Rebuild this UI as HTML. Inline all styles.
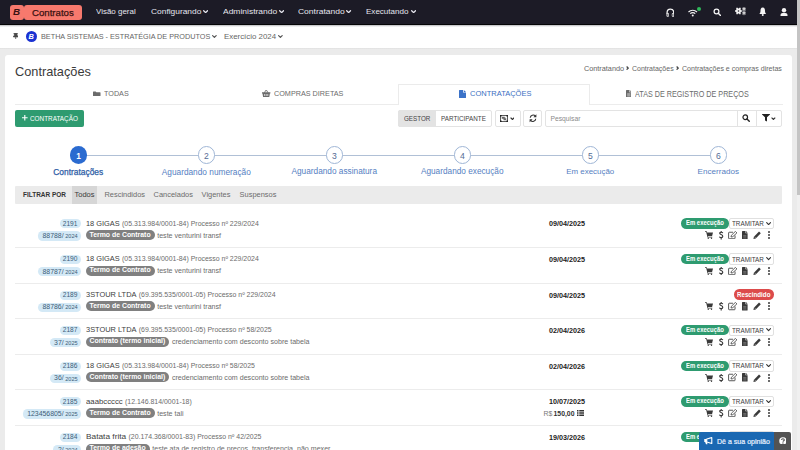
<!DOCTYPE html>
<html><head><meta charset="utf-8"><style>
html,body{margin:0;padding:0;width:800px;height:450px;overflow:hidden;background:#ebebeb;}
body{position:relative;font-family:"Liberation Sans",sans-serif;}
body>div,body>span,body>svg{position:absolute;display:block;}
body>span{white-space:nowrap;}
</style></head><body>
<div style="left:0.00px;top:0.00px;width:797.00px;height:24.50px;background:#1c1b26"></div>
<div style="left:9.50px;top:5.00px;width:14.00px;height:14.60px;background:#f7796d;border-radius:3px"></div>
<div style="left:23.50px;top:5.00px;width:58.50px;height:14.60px;background:#f7796d;border-radius:3px"></div>
<span style="left:13.00px;top:7.30px;font-size:9.800px;line-height:9.800px;color:#3a1212;font-weight:700;font-style:italic;">B</span>
<span style="left:32.00px;top:7.84px;font-size:9.642px;line-height:9.642px;color:#3a1212;-webkit-text-stroke:0.25px #3a1212;">Contratos</span>
<span style="left:96.40px;top:7.94px;font-size:8.101px;line-height:8.101px;color:#e6e6ee;transform:scaleX(0.9832);transform-origin:0 0;">Visão geral</span>
<span style="left:150.80px;top:7.94px;font-size:8.101px;line-height:8.101px;color:#e6e6ee;transform:scaleX(1.0363);transform-origin:0 0;">Configurando</span>
<svg style="left:203.00px;top:9.5px" width="5.2" height="3.8" viewBox="0 0 10 7.3"><path d="M1.3 1.3 L5 5 L8.7 1.3" stroke="#e6e6ee" stroke-width="2.5" fill="none" stroke-linecap="round" stroke-linejoin="round"/></svg>
<span style="left:222.60px;top:7.94px;font-size:8.101px;line-height:8.101px;color:#e6e6ee;transform:scaleX(1.0468);transform-origin:0 0;">Administrando</span>
<svg style="left:278.80px;top:9.5px" width="5.2" height="3.8" viewBox="0 0 10 7.3"><path d="M1.3 1.3 L5 5 L8.7 1.3" stroke="#e6e6ee" stroke-width="2.5" fill="none" stroke-linecap="round" stroke-linejoin="round"/></svg>
<span style="left:297.90px;top:7.94px;font-size:8.101px;line-height:8.101px;color:#e6e6ee;transform:scaleX(1.0475);transform-origin:0 0;">Contratando</span>
<svg style="left:346.40px;top:9.5px" width="5.2" height="3.8" viewBox="0 0 10 7.3"><path d="M1.3 1.3 L5 5 L8.7 1.3" stroke="#e6e6ee" stroke-width="2.5" fill="none" stroke-linecap="round" stroke-linejoin="round"/></svg>
<span style="left:366.20px;top:7.94px;font-size:8.101px;line-height:8.101px;color:#e6e6ee;transform:scaleX(0.9934);transform-origin:0 0;">Executando</span>
<svg style="left:410.80px;top:9.5px" width="5.2" height="3.8" viewBox="0 0 10 7.3"><path d="M1.3 1.3 L5 5 L8.7 1.3" stroke="#e6e6ee" stroke-width="2.5" fill="none" stroke-linecap="round" stroke-linejoin="round"/></svg>
<svg style="left:665.6px;top:7.6px" width="8.8" height="9" viewBox="0 0 17.6 18"><path d="M2.2 12 V8.8 A6.6 6.6 0 0 1 15.4 8.8 V12" stroke="#f4f4f4" stroke-width="2.6" fill="none"/><rect x="1" y="9.8" width="5" height="7.6" rx="2" fill="#f4f4f4"/><rect x="11.6" y="9.8" width="5" height="7.6" rx="2" fill="#f4f4f4"/><rect x="3" y="11.5" width="1.6" height="4.5" fill="#1c1b26"/><rect x="13" y="11.5" width="1.6" height="4.5" fill="#1c1b26"/></svg>
<svg style="left:688px;top:9px" width="9.5" height="7.5" viewBox="0 0 19 15"><path d="M1 6 A12 12 0 0 1 18 6" stroke="#f4f4f4" stroke-width="2.3" fill="none"/><path d="M4.5 9.3 A7 7 0 0 1 14.5 9.3" stroke="#f4f4f4" stroke-width="2.3" fill="none"/><circle cx="9.5" cy="13" r="2" fill="#f4f4f4"/></svg>
<div style="left:697.2px;top:6.6px;width:4px;height:4px;border-radius:50%;background:#2fb85a"></div>
<svg style="left:712.5px;top:8.3px" width="8.5" height="8" viewBox="0 0 17 16"><circle cx="7" cy="7" r="4.8" stroke="#f4f4f4" stroke-width="2.5" fill="none"/><path d="M10.5 10.5 L15 15" stroke="#f4f4f4" stroke-width="2.8" stroke-linecap="round"/></svg>
<svg style="left:734.5px;top:7.3px" width="11" height="8.4" viewBox="0 0 44 33.6"><circle cx="14.0" cy="16" r="10" fill="#f4f4f4"/><path d="M22.0 16.0 L25.8 16.0 M18.0 22.9 L19.9 26.2 M10.0 22.9 L8.1 26.2 M6.0 16.0 L2.2 16.0 M10.0 9.1 L8.1 5.8 M18.0 9.1 L19.9 5.8" stroke="#f4f4f4" stroke-width="6.5" stroke-linecap="round"/><circle cx="14.0" cy="16" r="3.2" fill="#1c1b26"/><circle cx="36" cy="8.5" r="5" fill="#f4f4f4"/><circle cx="36" cy="24.5" r="5" fill="#f4f4f4"/><path d="M39.5 10.5 L41.7 11.8 M36.0 12.5 L36.0 15.1 M32.5 10.5 L30.3 11.8 M32.5 6.5 L30.3 5.2 M36.0 4.5 L36.0 1.9 M39.5 6.5 L41.7 5.2 M39.5 26.5 L41.7 27.8 M36.0 28.5 L36.0 31.1 M32.5 26.5 L30.3 27.8 M32.5 22.5 L30.3 21.2 M36.0 20.5 L36.0 17.9 M39.5 22.5 L41.7 21.2" stroke="#f4f4f4" stroke-width="3.2" stroke-linecap="round"/><circle cx="36" cy="8.5" r="2" fill="#1c1b26"/><circle cx="36" cy="24.5" r="2" fill="#1c1b26"/></svg>
<svg style="left:759px;top:7.3px" width="7.5" height="9" viewBox="0 0 15 18"><path d="M7.5 1 C3.5 1 3 5 3 8 C3 11 2 12.5 0.5 14 H14.5 C13 12.5 12 11 12 8 C12 5 11.5 1 7.5 1Z" fill="#f4f4f4"/><circle cx="7.5" cy="15.8" r="2" fill="#f4f4f4"/></svg>
<svg style="left:780px;top:7.8px" width="8" height="8.4" viewBox="0 0 16 16.8"><circle cx="8" cy="4.6" r="4.4" fill="#f4f4f4"/><path d="M1 16.8 V14.2 C1 11.4 3 10 5.2 10 H10.8 C13 10 15 11.4 15 14.2 V16.8Z" fill="#f4f4f4"/></svg>
<div style="left:0.00px;top:24.50px;width:797.00px;height:23.50px;background:#ffffff"></div>
<div style="left:0.00px;top:23.70px;width:797.00px;height:1.30px;background:#050507"></div>
<div style="left:0.00px;top:25.00px;width:797.00px;height:1.60px;background:linear-gradient(#b8b8bc,#ffffff)"></div>
<div style="left:0.00px;top:47.60px;width:797.00px;height:1.50px;background:linear-gradient(#dcdcdc,#ebebeb)"></div>
<svg style="left:12.8px;top:32.9px" width="5.4" height="6.4" viewBox="0 0 10.8 12.8"><path d="M1 0.8 H9.8 M3 0.8 L2.6 5 L0.8 6.6 V7.8 H10 V6.6 L8.2 5 L7.8 0.8Z" stroke="#4a4a4a" stroke-width="1.6" fill="#4a4a4a" stroke-linejoin="round"/><path d="M5.4 7.8 V12.8" stroke="#4a4a4a" stroke-width="1.6"/></svg>
<div style="left:25.7px;top:30.5px;width:11.5px;height:11.5px;border-radius:50%;background:#1b32d2"></div>
<span style="left:28.60px;top:33.14px;font-size:7.400px;line-height:7.400px;color:#fff;font-weight:700;font-style:italic;">B</span>
<span style="left:41.00px;top:32.94px;font-size:8.101px;line-height:8.101px;color:#666;transform:scaleX(0.8975);transform-origin:0 0;">BETHA SISTEMAS - ESTRATÉGIA DE PRODUTOS</span>
<svg style="left:212.3px;top:34.6px" width="4.8" height="3.6" viewBox="0 0 10 7.3"><path d="M1.3 1.3 L5 5 L8.7 1.3" stroke="#555" stroke-width="2.5" fill="none" stroke-linecap="round" stroke-linejoin="round"/></svg>
<span style="left:224.30px;top:32.94px;font-size:8.101px;line-height:8.101px;color:#666;transform:scaleX(0.9724);transform-origin:0 0;">Exercício 2024</span>
<svg style="left:277.8px;top:34.6px" width="4.8" height="3.6" viewBox="0 0 10 7.3"><path d="M1.3 1.3 L5 5 L8.7 1.3" stroke="#555" stroke-width="2.5" fill="none" stroke-linecap="round" stroke-linejoin="round"/></svg>
<div style="left:797.00px;top:0.00px;width:3.00px;height:450.00px;background:#f0f0f0"></div>
<div style="left:797.00px;top:0.00px;width:3.00px;height:195.00px;background:#c4c4c4"></div>
<div style="left:5.00px;top:55.00px;width:787.00px;height:400.00px;background:#fff;border-radius:3px"></div>
<span style="left:15.00px;top:65.78px;font-size:12.779px;line-height:12.779px;color:#3a3a3a;">Contratações</span>
<span style="left:583.90px;top:65.00px;font-size:7.323px;line-height:7.323px;color:#666;">Contratando</span>
<svg style="left:626.3px;top:66.2px" width="2.8" height="4.2" viewBox="0 0 5 8"><path d="M1 1 L4 4 L1 7" stroke="#444" stroke-width="2.4" fill="none"/></svg>
<span style="left:632.00px;top:65.26px;font-size:7.012px;line-height:7.012px;color:#666;">Contratações</span>
<svg style="left:675.8px;top:66.2px" width="2.8" height="4.2" viewBox="0 0 5 8"><path d="M1 1 L4 4 L1 7" stroke="#444" stroke-width="2.4" fill="none"/></svg>
<span style="left:682.00px;top:65.23px;font-size:7.056px;line-height:7.056px;color:#666;">Contratações e compras diretas</span>
<div style="left:15.00px;top:104.00px;width:768.00px;height:1.00px;background:#ececec"></div>
<div style="left:398.40px;top:83.80px;width:191.60px;height:21.20px;background:#fff;border:1px solid #ebebeb;border-bottom:none;border-radius:1px 1px 0 0;box-sizing:border-box"></div>
<svg style="left:93.1px;top:90.9px" width="7.5" height="5.6" viewBox="0 0 20 12"><path d="M0 1 Q0 0 1 0 H7 L9 2 H19 Q20 2 20 3 V11 Q20 12 19 12 H1 Q0 12 0 11Z" fill="#6b6b6b"/></svg>
<span style="left:104.00px;top:89.68px;font-size:7.821px;line-height:7.821px;color:#6b6b6b;transform:scaleX(0.9235);transform-origin:0 0;">TODAS</span>
<svg style="left:262.2px;top:89.9px" width="8.4" height="6.9" viewBox="0 0 16.8 13.8"><path d="M5 5 L7.6 0.8 M11.8 5 L9.2 0.8" stroke="#6b6b6b" stroke-width="1.8" stroke-linecap="round"/><path d="M0 4.6 H16.8 V6.8 H15.8 L14.6 13.8 H2.2 L1 6.8 H0Z" fill="#6b6b6b"/><path d="M5.2 8.2 V11.8 M8.4 8.2 V11.8 M11.6 8.2 V11.8" stroke="#fff" stroke-width="1.5"/></svg>
<span style="left:273.50px;top:90.16px;font-size:7.961px;line-height:7.961px;color:#6b6b6b;transform:scaleX(0.9100);transform-origin:0 0;">COMPRAS DIRETAS</span>
<svg style="left:459px;top:90px" width="7" height="8" viewBox="0 0 14 16"><path d="M0 1 Q0 0 1 0 H8 V5 H14 V15 Q14 16 13 16 H1 Q0 16 0 15Z M9.5 0 L14 4 H9.5Z" fill="#3b72c8"/></svg>
<span style="left:469.50px;top:90.14px;font-size:8.101px;line-height:8.101px;color:#3b6fc2;transform:scaleX(0.9275);transform-origin:0 0;">CONTRATAÇÕES</span>
<svg style="left:625.6px;top:90.1px" width="5.7" height="7.1" viewBox="0 0 12 16" preserveAspectRatio="none"><path d="M0 1 Q0 0 1 0 H7 V5 H12 V15 Q12 16 11 16 H1 Q0 16 0 15Z M8 0 L12 4 H8Z" fill="#6b6b6b"/><path d="M2.5 8.5 H9.5 M2.5 11 H9.5 M2.5 13.5 H9.5" stroke="#fff" stroke-width="1"/></svg>
<span style="left:635.00px;top:90.21px;font-size:8.380px;line-height:8.380px;color:#6b6b6b;transform:scaleX(0.8596);transform-origin:0 0;">ATAS DE REGISTRO DE PREÇOS</span>
<div style="left:15.00px;top:110.30px;width:69.00px;height:16.50px;background:#2e9b70;border-radius:2px"></div>
<svg style="left:22.4px;top:115.1px" width="5.6" height="5.6" viewBox="0 0 12 12"><path d="M6 0 V12 M0 6 H12" stroke="#fff" stroke-width="2.4"/></svg>
<span style="left:30.00px;top:115.09px;font-size:6.983px;line-height:6.983px;color:#fff;transform:scaleX(0.9142);transform-origin:0 0;">CONTRATAÇÃO</span>
<div style="left:398.40px;top:110.40px;width:94.00px;height:16.30px;background:#fff;border:1px solid #e3e3e3;border-radius:2px;box-sizing:border-box"></div>
<div style="left:398.40px;top:110.40px;width:37.60px;height:16.30px;background:#e3e3e3;border:1px solid #e3e3e3;border-radius:2px 0 0 2px;box-sizing:border-box"></div>
<span style="left:403.60px;top:115.09px;font-size:6.983px;line-height:6.983px;color:#444;transform:scaleX(0.8991);transform-origin:0 0;">GESTOR</span>
<span style="left:441.00px;top:115.09px;font-size:6.983px;line-height:6.983px;color:#444;transform:scaleX(0.9060);transform-origin:0 0;">PARTICIPANTE</span>
<div style="left:495.00px;top:110.40px;width:25.50px;height:16.30px;background:#fff;border:1px solid #e3e3e3;border-radius:2px;box-sizing:border-box"></div>
<svg style="left:500.3px;top:114.7px" width="8" height="7" viewBox="0 0 16 14"><rect x="1.2" y="1.2" width="13.6" height="11.6" fill="none" stroke="#333" stroke-width="1.6"/><path d="M0 0 H3.2 V3.2 H0Z M12.8 0 H16 V3.2 H12.8Z M0 10.8 H3.2 V14 H0Z M12.8 10.8 H16 V14 H12.8Z" fill="#222"/><path d="M3.5 3.5 H9.5 V7.5 H3.5Z M7 6.5 H12.5 V10.5 H7Z" fill="#666"/><path d="M9 4 L10.5 4 L10.5 5.5Z" fill="#222"/></svg>
<svg style="left:509.6px;top:116.7px" width="4.9" height="3.2" viewBox="0 0 10 6.5"><path d="M1.2 1.2 L5 5 L8.8 1.2" stroke="#333" stroke-width="2.6" fill="none"/></svg>
<div style="left:522.50px;top:110.40px;width:19.70px;height:16.30px;background:#fff;border:1px solid #e3e3e3;border-radius:2px;box-sizing:border-box"></div>
<svg style="left:528.5px;top:114.3px" width="8" height="8.5" viewBox="0 0 16 17"><path d="M2.5 7.5 A5.8 5.8 0 0 1 12.8 4.3" stroke="#333" stroke-width="2.2" fill="none"/><path d="M14.8 0.5 V6.5 H8.8Z" fill="#333"/><path d="M13.5 9.5 A5.8 5.8 0 0 1 3.2 12.7" stroke="#333" stroke-width="2.2" fill="none"/><path d="M1.2 16.5 V10.5 H7.2Z" fill="#333"/></svg>
<div style="left:545.00px;top:110.40px;width:236.60px;height:16.30px;background:#fff;border:1px solid #e3e3e3;border-radius:2px;box-sizing:border-box"></div>
<span style="left:550.50px;top:115.89px;font-size:6.747px;line-height:6.747px;color:#8a8a8a;">Pesquisar</span>
<div style="left:736.50px;top:110.40px;width:1.00px;height:16.30px;background:#e3e3e3"></div>
<div style="left:756.00px;top:110.40px;width:1.00px;height:16.30px;background:#e3e3e3"></div>
<svg style="left:742px;top:114.3px" width="8" height="8" viewBox="0 0 16 16"><circle cx="6.5" cy="6.5" r="4.6" stroke="#222" stroke-width="2.4" fill="none"/><path d="M10 10 L14.5 14.5" stroke="#222" stroke-width="2.8" stroke-linecap="round"/></svg>
<svg style="left:762px;top:114.2px" width="8" height="7.4" viewBox="0 0 16 14.8"><path d="M0 0 H16 V1.2 L10 6.5 V14.8 L6 13 V6.5 L0 1.2Z" fill="#222"/></svg>
<svg style="left:771.2px;top:117.0px" width="4.8" height="3.2" viewBox="0 0 10 6.5"><path d="M1.2 1.2 L5 5 L8.8 1.2" stroke="#333" stroke-width="2.4" fill="none"/></svg>
<div style="left:78.30px;top:154.60px;width:640.00px;height:1.30px;background:#b0c0d6"></div>
<div style="left:69.70px;top:146.4px;width:17.2px;height:17.2px;border-radius:50%;background:#2b6bd0"></div>
<span style="left:76.16px;top:151.79px;font-size:8.400px;line-height:8.400px;color:#fff;font-weight:700;">1</span>
<span style="left:53.30px;top:167.88px;font-size:8.407px;line-height:8.407px;color:#2e5da6;-webkit-text-stroke:0.25px #2e5da6;">Contratações</span>
<div style="left:197.70px;top:146.4px;width:17.2px;height:17.2px;border-radius:50%;background:#fff;border:1px solid #9fb6d6;box-sizing:border-box"></div>
<span style="left:203.91px;top:151.62px;font-size:8.600px;line-height:8.600px;color:#556c95;">2</span>
<span style="left:161.75px;top:167.97px;font-size:8.305px;line-height:8.305px;color:#5580c2;">Aguardando numeração</span>
<div style="left:325.70px;top:146.4px;width:17.2px;height:17.2px;border-radius:50%;background:#fff;border:1px solid #9fb6d6;box-sizing:border-box"></div>
<span style="left:331.91px;top:151.62px;font-size:8.600px;line-height:8.600px;color:#556c95;">3</span>
<span style="left:291.50px;top:167.99px;font-size:8.279px;line-height:8.279px;color:#5580c2;">Aguardando assinatura</span>
<div style="left:453.70px;top:146.4px;width:17.2px;height:17.2px;border-radius:50%;background:#fff;border:1px solid #9fb6d6;box-sizing:border-box"></div>
<span style="left:459.91px;top:151.62px;font-size:8.600px;line-height:8.600px;color:#556c95;">4</span>
<span style="left:420.95px;top:168.00px;font-size:8.264px;line-height:8.264px;color:#5580c2;">Aguardando execução</span>
<div style="left:581.70px;top:146.4px;width:17.2px;height:17.2px;border-radius:50%;background:#fff;border:1px solid #9fb6d6;box-sizing:border-box"></div>
<span style="left:587.91px;top:151.62px;font-size:8.600px;line-height:8.600px;color:#556c95;">5</span>
<span style="left:566.20px;top:168.27px;font-size:7.956px;line-height:7.956px;color:#5580c2;">Em execução</span>
<div style="left:709.70px;top:146.4px;width:17.2px;height:17.2px;border-radius:50%;background:#fff;border:1px solid #9fb6d6;box-sizing:border-box"></div>
<span style="left:715.91px;top:151.62px;font-size:8.600px;line-height:8.600px;color:#556c95;">6</span>
<span style="left:697.55px;top:168.13px;font-size:8.116px;line-height:8.116px;color:#5580c2;">Encerrados</span>
<div style="left:15.00px;top:186.20px;width:766.70px;height:17.60px;background:#ebebeb;border-radius:1px"></div>
<div style="left:72.20px;top:186.20px;width:25.00px;height:17.60px;background:#d6d6d6"></div>
<span style="left:23.00px;top:191.52px;font-size:6.469px;line-height:6.469px;color:#333;font-weight:700;">FILTRAR POR</span>
<span style="left:74.50px;top:191.05px;font-size:7.500px;line-height:7.500px;color:#3a3a3a;">Todos</span>
<span style="left:104.50px;top:191.09px;font-size:7.450px;line-height:7.450px;color:#6c6c6c;">Rescindidos</span>
<span style="left:153.60px;top:191.09px;font-size:7.450px;line-height:7.450px;color:#6c6c6c;">Cancelados</span>
<span style="left:201.60px;top:191.09px;font-size:7.450px;line-height:7.450px;color:#6c6c6c;">Vigentes</span>
<span style="left:239.60px;top:191.09px;font-size:7.450px;line-height:7.450px;color:#6c6c6c;">Suspensos</span>
<div style="left:60.02px;top:219.30px;width:21.38px;height:9.20px;background:#d4e9f6;border-radius:4.6px"></div>
<span style="left:62.72px;top:220.61px;font-size:6.600px;line-height:6.600px;color:#3d5d78;">2191</span>
<div style="left:38.04px;top:231.40px;width:43.36px;height:9.20px;background:#d4e9f6;border-radius:4.6px"></div>
<span style="left:42.54px;top:233.06px;font-size:6.900px;line-height:6.900px;color:#3d5d78;">88788/</span>
<span style="left:65.24px;top:234.16px;font-size:5.600px;line-height:5.600px;color:#3d5d78;">2024</span>
<span style="left:86.30px;top:219.54px;font-size:8.101px;line-height:8.101px;color:#404040;transform:scaleX(0.9142);transform-origin:0 0;">18 GIGAS</span>
<span style="left:122.05px;top:220.52px;font-size:6.950px;line-height:6.950px;color:#6c6c6c;">(05.313.984/0001-84) Processo nº 229/2024</span>
<div style="left:85.50px;top:230.00px;width:69.20px;height:10.00px;background:#808080;border-radius:5px"></div>
<span style="left:89.50px;top:231.56px;font-size:6.900px;line-height:6.900px;color:#fff;font-weight:700;">Termo de Contrato</span>
<span style="left:157.20px;top:232.69px;font-size:7.100px;line-height:7.100px;color:#6c6c6c;">teste venturini transf</span>
<span style="left:549.00px;top:220.31px;font-size:7.194px;line-height:7.194px;color:#222;font-weight:700;">09/04/2025</span>
<div style="left:680.80px;top:218.10px;width:47.90px;height:10.60px;background:#2e9b70;border-radius:5.3px"></div>
<span style="left:685.50px;top:220.44px;font-size:6.564px;line-height:6.564px;color:#fff;font-weight:700;transform:scaleX(0.9056);transform-origin:0 0;">Em execução</span>
<div style="left:729.30px;top:217.80px;width:44.50px;height:11.40px;background:#fff;border:1px solid #e0e0e0;border-radius:2px;box-sizing:border-box"></div>
<span style="left:732.20px;top:219.99px;font-size:6.983px;line-height:6.983px;color:#3c3c3c;transform:scaleX(0.9070);transform-origin:0 0;">TRAMITAR</span>
<svg style="left:765.6px;top:221.50px" width="5.2" height="3.6" viewBox="0 0 10 7"><path d="M1.3 1.3 L5 5 L8.7 1.3" stroke="#333" stroke-width="2.2" fill="none" stroke-linecap="round" stroke-linejoin="round"/></svg>
<svg style="left:705.3px;top:231.20px" width="8" height="8" viewBox="0 0 16 16"><path d="M0 0.5 H3.5 L4.3 3 H16 L14.2 9.8 H5.7 L6.2 11.3 H14.5 V13 H5 L2.4 2.2 H0Z" fill="#3a3a3a"/><circle cx="6.5" cy="14.6" r="1.4" fill="#3a3a3a"/><circle cx="13" cy="14.6" r="1.4" fill="#3a3a3a"/></svg>
<svg style="left:719.2px;top:231.20px" width="4.4" height="8.4" viewBox="0 0 8.8 16.8"><path d="M7.6 4.2 C7.2 3 6 2.4 4.4 2.4 C2.6 2.4 1.4 3.3 1.4 4.6 C1.4 7.6 7.6 6.6 7.6 10.6 C7.6 12.2 6.2 13.4 4.4 13.4 C2.6 13.4 1.4 12.6 1 11.3 M4.4 0 V2.4 M4.4 13.4 V16.8" stroke="#3a3a3a" stroke-width="2.3" fill="none"/></svg>
<svg style="left:728px;top:231.00px" width="9.6" height="8.4" viewBox="0 0 19.2 16.8"><path d="M10 2.5 H2.5 Q1.2 2.5 1.2 3.8 V14.2 Q1.2 15.5 2.5 15.5 H12.8 Q14.1 15.5 14.1 14.2 V9" stroke="#3a3a3a" stroke-width="1.7" fill="none"/><path d="M6 12 L6.8 8.6 L14.8 0.8 L17.8 3.8 L9.6 11.4Z" fill="none" stroke="#3a3a3a" stroke-width="1.6" stroke-linejoin="round"/></svg>
<svg style="left:742.4px;top:231.00px" width="5.6" height="8.4" viewBox="0 0 11.2 16.8"><path d="M0 1 Q0 0 1 0 H7 V4.5 H11.2 V15.8 Q11.2 16.8 10.2 16.8 H1 Q0 16.8 0 15.8Z M8 0 L11.2 3.5 H8Z" fill="#3a3a3a"/><path d="M2.5 9 H8.7 M2.5 11.5 H8.7 M2.5 14 H8.7" stroke="#999" stroke-width="1"/></svg>
<svg style="left:752.7px;top:231.10px" width="8.4" height="8.4" viewBox="0 0 16 16"><path d="M0.8 15.2 L1.8 10.8 L11.5 1.1 L14.9 4.5 L5.2 14.2Z" fill="#3a3a3a"/><path d="M3 11 L5 13" stroke="#fff" stroke-width="0.9"/></svg>
<div style="left:767.6px;top:231.20px;width:2.1px;height:2.1px;border-radius:50%;background:#3a3a3a"></div>
<div style="left:767.6px;top:234.20px;width:2.1px;height:2.1px;border-radius:50%;background:#3a3a3a"></div>
<div style="left:767.6px;top:237.20px;width:2.1px;height:2.1px;border-radius:50%;background:#3a3a3a"></div>
<div style="left:15.00px;top:247.00px;width:767.00px;height:0.80px;background:#ececec"></div>
<div style="left:60.02px;top:254.90px;width:21.38px;height:9.20px;background:#d4e9f6;border-radius:4.6px"></div>
<span style="left:62.72px;top:256.21px;font-size:6.600px;line-height:6.600px;color:#3d5d78;">2190</span>
<div style="left:38.04px;top:267.00px;width:43.36px;height:9.20px;background:#d4e9f6;border-radius:4.6px"></div>
<span style="left:42.54px;top:268.66px;font-size:6.900px;line-height:6.900px;color:#3d5d78;">88787/</span>
<span style="left:65.24px;top:269.76px;font-size:5.600px;line-height:5.600px;color:#3d5d78;">2024</span>
<span style="left:86.30px;top:255.14px;font-size:8.101px;line-height:8.101px;color:#404040;transform:scaleX(0.9142);transform-origin:0 0;">18 GIGAS</span>
<span style="left:122.05px;top:256.12px;font-size:6.950px;line-height:6.950px;color:#6c6c6c;">(05.313.984/0001-84) Processo nº 229/2024</span>
<div style="left:85.50px;top:265.60px;width:69.20px;height:10.00px;background:#808080;border-radius:5px"></div>
<span style="left:89.50px;top:267.16px;font-size:6.900px;line-height:6.900px;color:#fff;font-weight:700;">Termo de Contrato</span>
<span style="left:157.20px;top:268.29px;font-size:7.100px;line-height:7.100px;color:#6c6c6c;">teste venturini transf</span>
<span style="left:549.00px;top:255.91px;font-size:7.194px;line-height:7.194px;color:#222;font-weight:700;">09/04/2025</span>
<div style="left:680.80px;top:253.70px;width:47.90px;height:10.60px;background:#2e9b70;border-radius:5.3px"></div>
<span style="left:685.50px;top:256.04px;font-size:6.564px;line-height:6.564px;color:#fff;font-weight:700;transform:scaleX(0.9056);transform-origin:0 0;">Em execução</span>
<div style="left:729.30px;top:253.40px;width:44.50px;height:11.40px;background:#fff;border:1px solid #e0e0e0;border-radius:2px;box-sizing:border-box"></div>
<span style="left:732.20px;top:255.59px;font-size:6.983px;line-height:6.983px;color:#3c3c3c;transform:scaleX(0.9070);transform-origin:0 0;">TRAMITAR</span>
<svg style="left:765.6px;top:257.10px" width="5.2" height="3.6" viewBox="0 0 10 7"><path d="M1.3 1.3 L5 5 L8.7 1.3" stroke="#333" stroke-width="2.2" fill="none" stroke-linecap="round" stroke-linejoin="round"/></svg>
<svg style="left:705.3px;top:266.80px" width="8" height="8" viewBox="0 0 16 16"><path d="M0 0.5 H3.5 L4.3 3 H16 L14.2 9.8 H5.7 L6.2 11.3 H14.5 V13 H5 L2.4 2.2 H0Z" fill="#3a3a3a"/><circle cx="6.5" cy="14.6" r="1.4" fill="#3a3a3a"/><circle cx="13" cy="14.6" r="1.4" fill="#3a3a3a"/></svg>
<svg style="left:719.2px;top:266.80px" width="4.4" height="8.4" viewBox="0 0 8.8 16.8"><path d="M7.6 4.2 C7.2 3 6 2.4 4.4 2.4 C2.6 2.4 1.4 3.3 1.4 4.6 C1.4 7.6 7.6 6.6 7.6 10.6 C7.6 12.2 6.2 13.4 4.4 13.4 C2.6 13.4 1.4 12.6 1 11.3 M4.4 0 V2.4 M4.4 13.4 V16.8" stroke="#3a3a3a" stroke-width="2.3" fill="none"/></svg>
<svg style="left:728px;top:266.60px" width="9.6" height="8.4" viewBox="0 0 19.2 16.8"><path d="M10 2.5 H2.5 Q1.2 2.5 1.2 3.8 V14.2 Q1.2 15.5 2.5 15.5 H12.8 Q14.1 15.5 14.1 14.2 V9" stroke="#3a3a3a" stroke-width="1.7" fill="none"/><path d="M6 12 L6.8 8.6 L14.8 0.8 L17.8 3.8 L9.6 11.4Z" fill="none" stroke="#3a3a3a" stroke-width="1.6" stroke-linejoin="round"/></svg>
<svg style="left:742.4px;top:266.60px" width="5.6" height="8.4" viewBox="0 0 11.2 16.8"><path d="M0 1 Q0 0 1 0 H7 V4.5 H11.2 V15.8 Q11.2 16.8 10.2 16.8 H1 Q0 16.8 0 15.8Z M8 0 L11.2 3.5 H8Z" fill="#3a3a3a"/><path d="M2.5 9 H8.7 M2.5 11.5 H8.7 M2.5 14 H8.7" stroke="#999" stroke-width="1"/></svg>
<svg style="left:752.7px;top:266.70px" width="8.4" height="8.4" viewBox="0 0 16 16"><path d="M0.8 15.2 L1.8 10.8 L11.5 1.1 L14.9 4.5 L5.2 14.2Z" fill="#3a3a3a"/><path d="M3 11 L5 13" stroke="#fff" stroke-width="0.9"/></svg>
<div style="left:767.6px;top:267.20px;width:2.1px;height:2.1px;border-radius:50%;background:#3a3a3a"></div>
<div style="left:767.6px;top:270.20px;width:2.1px;height:2.1px;border-radius:50%;background:#3a3a3a"></div>
<div style="left:767.6px;top:273.20px;width:2.1px;height:2.1px;border-radius:50%;background:#3a3a3a"></div>
<div style="left:15.00px;top:282.60px;width:767.00px;height:0.80px;background:#ececec"></div>
<div style="left:60.02px;top:290.50px;width:21.38px;height:9.20px;background:#d4e9f6;border-radius:4.6px"></div>
<span style="left:62.72px;top:291.81px;font-size:6.600px;line-height:6.600px;color:#3d5d78;">2189</span>
<div style="left:38.04px;top:302.60px;width:43.36px;height:9.20px;background:#d4e9f6;border-radius:4.6px"></div>
<span style="left:42.54px;top:304.26px;font-size:6.900px;line-height:6.900px;color:#3d5d78;">88786/</span>
<span style="left:65.24px;top:305.36px;font-size:5.600px;line-height:5.600px;color:#3d5d78;">2024</span>
<span style="left:86.30px;top:290.74px;font-size:8.101px;line-height:8.101px;color:#404040;transform:scaleX(0.9171);transform-origin:0 0;">3STOUR LTDA</span>
<span style="left:138.80px;top:291.72px;font-size:6.950px;line-height:6.950px;color:#6c6c6c;">(69.395.535/0001-05) Processo nº 229/2024</span>
<div style="left:85.50px;top:301.20px;width:69.20px;height:10.00px;background:#808080;border-radius:5px"></div>
<span style="left:89.50px;top:302.76px;font-size:6.900px;line-height:6.900px;color:#fff;font-weight:700;">Termo de Contrato</span>
<span style="left:157.20px;top:303.89px;font-size:7.100px;line-height:7.100px;color:#6c6c6c;">teste venturini transf</span>
<span style="left:549.00px;top:291.51px;font-size:7.194px;line-height:7.194px;color:#222;font-weight:700;">09/04/2025</span>
<div style="left:733.80px;top:289.30px;width:40.00px;height:10.60px;background:#dc4b4b;border-radius:5.3px"></div>
<span style="left:737.05px;top:291.64px;font-size:6.564px;line-height:6.564px;color:#fff;font-weight:700;transform:scaleX(0.9470);transform-origin:0 0;">Rescindido</span>
<svg style="left:705.3px;top:302.40px" width="8" height="8" viewBox="0 0 16 16"><path d="M0 0.5 H3.5 L4.3 3 H16 L14.2 9.8 H5.7 L6.2 11.3 H14.5 V13 H5 L2.4 2.2 H0Z" fill="#3a3a3a"/><circle cx="6.5" cy="14.6" r="1.4" fill="#3a3a3a"/><circle cx="13" cy="14.6" r="1.4" fill="#3a3a3a"/></svg>
<svg style="left:719.2px;top:302.40px" width="4.4" height="8.4" viewBox="0 0 8.8 16.8"><path d="M7.6 4.2 C7.2 3 6 2.4 4.4 2.4 C2.6 2.4 1.4 3.3 1.4 4.6 C1.4 7.6 7.6 6.6 7.6 10.6 C7.6 12.2 6.2 13.4 4.4 13.4 C2.6 13.4 1.4 12.6 1 11.3 M4.4 0 V2.4 M4.4 13.4 V16.8" stroke="#3a3a3a" stroke-width="2.3" fill="none"/></svg>
<svg style="left:728px;top:302.20px" width="9.6" height="8.4" viewBox="0 0 19.2 16.8"><path d="M10 2.5 H2.5 Q1.2 2.5 1.2 3.8 V14.2 Q1.2 15.5 2.5 15.5 H12.8 Q14.1 15.5 14.1 14.2 V9" stroke="#3a3a3a" stroke-width="1.7" fill="none"/><path d="M6 12 L6.8 8.6 L14.8 0.8 L17.8 3.8 L9.6 11.4Z" fill="none" stroke="#3a3a3a" stroke-width="1.6" stroke-linejoin="round"/></svg>
<svg style="left:742.4px;top:302.20px" width="5.6" height="8.4" viewBox="0 0 11.2 16.8"><path d="M0 1 Q0 0 1 0 H7 V4.5 H11.2 V15.8 Q11.2 16.8 10.2 16.8 H1 Q0 16.8 0 15.8Z M8 0 L11.2 3.5 H8Z" fill="#3a3a3a"/><path d="M2.5 9 H8.7 M2.5 11.5 H8.7 M2.5 14 H8.7" stroke="#999" stroke-width="1"/></svg>
<svg style="left:752.7px;top:302.30px" width="8.4" height="8.4" viewBox="0 0 16 16"><path d="M0.8 15.2 L1.8 10.8 L11.5 1.1 L14.9 4.5 L5.2 14.2Z" fill="#3a3a3a"/><path d="M3 11 L5 13" stroke="#fff" stroke-width="0.9"/></svg>
<div style="left:767.6px;top:302.20px;width:2.1px;height:2.1px;border-radius:50%;background:#3a3a3a"></div>
<div style="left:767.6px;top:305.20px;width:2.1px;height:2.1px;border-radius:50%;background:#3a3a3a"></div>
<div style="left:767.6px;top:308.20px;width:2.1px;height:2.1px;border-radius:50%;background:#3a3a3a"></div>
<div style="left:15.00px;top:318.20px;width:767.00px;height:0.80px;background:#ececec"></div>
<div style="left:60.02px;top:326.10px;width:21.38px;height:9.20px;background:#d4e9f6;border-radius:4.6px"></div>
<span style="left:62.72px;top:327.41px;font-size:6.600px;line-height:6.600px;color:#3d5d78;">2187</span>
<div style="left:49.55px;top:338.20px;width:31.85px;height:9.20px;background:#d4e9f6;border-radius:4.6px"></div>
<span style="left:54.05px;top:339.86px;font-size:6.900px;line-height:6.900px;color:#3d5d78;">37/</span>
<span style="left:65.24px;top:340.96px;font-size:5.600px;line-height:5.600px;color:#3d5d78;">2025</span>
<span style="left:86.30px;top:326.34px;font-size:8.101px;line-height:8.101px;color:#404040;transform:scaleX(0.9171);transform-origin:0 0;">3STOUR LTDA</span>
<span style="left:138.80px;top:327.32px;font-size:6.950px;line-height:6.950px;color:#6c6c6c;">(69.395.535/0001-05) Processo nº 58/2025</span>
<div style="left:85.50px;top:336.80px;width:83.90px;height:10.00px;background:#808080;border-radius:5px"></div>
<span style="left:89.50px;top:338.36px;font-size:6.900px;line-height:6.900px;color:#fff;font-weight:700;">Contrato (termo inicial)</span>
<span style="left:171.90px;top:339.49px;font-size:7.100px;line-height:7.100px;color:#6c6c6c;">credenciamento com desconto sobre tabela</span>
<span style="left:549.00px;top:327.11px;font-size:7.194px;line-height:7.194px;color:#222;font-weight:700;">02/04/2026</span>
<div style="left:680.80px;top:324.90px;width:47.90px;height:10.60px;background:#2e9b70;border-radius:5.3px"></div>
<span style="left:685.50px;top:327.24px;font-size:6.564px;line-height:6.564px;color:#fff;font-weight:700;transform:scaleX(0.9056);transform-origin:0 0;">Em execução</span>
<div style="left:729.30px;top:324.60px;width:44.50px;height:11.40px;background:#fff;border:1px solid #e0e0e0;border-radius:2px;box-sizing:border-box"></div>
<span style="left:732.20px;top:326.79px;font-size:6.983px;line-height:6.983px;color:#3c3c3c;transform:scaleX(0.9070);transform-origin:0 0;">TRAMITAR</span>
<svg style="left:765.6px;top:328.30px" width="5.2" height="3.6" viewBox="0 0 10 7"><path d="M1.3 1.3 L5 5 L8.7 1.3" stroke="#333" stroke-width="2.2" fill="none" stroke-linecap="round" stroke-linejoin="round"/></svg>
<svg style="left:705.3px;top:338.00px" width="8" height="8" viewBox="0 0 16 16"><path d="M0 0.5 H3.5 L4.3 3 H16 L14.2 9.8 H5.7 L6.2 11.3 H14.5 V13 H5 L2.4 2.2 H0Z" fill="#3a3a3a"/><circle cx="6.5" cy="14.6" r="1.4" fill="#3a3a3a"/><circle cx="13" cy="14.6" r="1.4" fill="#3a3a3a"/></svg>
<svg style="left:719.2px;top:338.00px" width="4.4" height="8.4" viewBox="0 0 8.8 16.8"><path d="M7.6 4.2 C7.2 3 6 2.4 4.4 2.4 C2.6 2.4 1.4 3.3 1.4 4.6 C1.4 7.6 7.6 6.6 7.6 10.6 C7.6 12.2 6.2 13.4 4.4 13.4 C2.6 13.4 1.4 12.6 1 11.3 M4.4 0 V2.4 M4.4 13.4 V16.8" stroke="#3a3a3a" stroke-width="2.3" fill="none"/></svg>
<svg style="left:728px;top:337.80px" width="9.6" height="8.4" viewBox="0 0 19.2 16.8"><path d="M10 2.5 H2.5 Q1.2 2.5 1.2 3.8 V14.2 Q1.2 15.5 2.5 15.5 H12.8 Q14.1 15.5 14.1 14.2 V9" stroke="#3a3a3a" stroke-width="1.7" fill="none"/><path d="M6 12 L6.8 8.6 L14.8 0.8 L17.8 3.8 L9.6 11.4Z" fill="none" stroke="#3a3a3a" stroke-width="1.6" stroke-linejoin="round"/></svg>
<svg style="left:742.4px;top:337.80px" width="5.6" height="8.4" viewBox="0 0 11.2 16.8"><path d="M0 1 Q0 0 1 0 H7 V4.5 H11.2 V15.8 Q11.2 16.8 10.2 16.8 H1 Q0 16.8 0 15.8Z M8 0 L11.2 3.5 H8Z" fill="#3a3a3a"/><path d="M2.5 9 H8.7 M2.5 11.5 H8.7 M2.5 14 H8.7" stroke="#999" stroke-width="1"/></svg>
<svg style="left:752.7px;top:337.90px" width="8.4" height="8.4" viewBox="0 0 16 16"><path d="M0.8 15.2 L1.8 10.8 L11.5 1.1 L14.9 4.5 L5.2 14.2Z" fill="#3a3a3a"/><path d="M3 11 L5 13" stroke="#fff" stroke-width="0.9"/></svg>
<div style="left:767.6px;top:338.20px;width:2.1px;height:2.1px;border-radius:50%;background:#3a3a3a"></div>
<div style="left:767.6px;top:341.20px;width:2.1px;height:2.1px;border-radius:50%;background:#3a3a3a"></div>
<div style="left:767.6px;top:344.20px;width:2.1px;height:2.1px;border-radius:50%;background:#3a3a3a"></div>
<div style="left:15.00px;top:353.80px;width:767.00px;height:0.80px;background:#ececec"></div>
<div style="left:60.02px;top:361.70px;width:21.38px;height:9.20px;background:#d4e9f6;border-radius:4.6px"></div>
<span style="left:62.72px;top:363.01px;font-size:6.600px;line-height:6.600px;color:#3d5d78;">2186</span>
<div style="left:49.55px;top:373.80px;width:31.85px;height:9.20px;background:#d4e9f6;border-radius:4.6px"></div>
<span style="left:54.05px;top:375.46px;font-size:6.900px;line-height:6.900px;color:#3d5d78;">36/</span>
<span style="left:65.24px;top:376.56px;font-size:5.600px;line-height:5.600px;color:#3d5d78;">2025</span>
<span style="left:86.30px;top:361.94px;font-size:8.101px;line-height:8.101px;color:#404040;transform:scaleX(0.9142);transform-origin:0 0;">18 GIGAS</span>
<span style="left:122.05px;top:362.92px;font-size:6.950px;line-height:6.950px;color:#6c6c6c;">(05.313.984/0001-84) Processo nº 58/2025</span>
<div style="left:85.50px;top:372.40px;width:83.90px;height:10.00px;background:#808080;border-radius:5px"></div>
<span style="left:89.50px;top:373.96px;font-size:6.900px;line-height:6.900px;color:#fff;font-weight:700;">Contrato (termo inicial)</span>
<span style="left:171.90px;top:375.09px;font-size:7.100px;line-height:7.100px;color:#6c6c6c;">credenciamento com desconto sobre tabela</span>
<span style="left:549.00px;top:362.71px;font-size:7.194px;line-height:7.194px;color:#222;font-weight:700;">02/04/2026</span>
<div style="left:680.80px;top:360.50px;width:47.90px;height:10.60px;background:#2e9b70;border-radius:5.3px"></div>
<span style="left:685.50px;top:362.84px;font-size:6.564px;line-height:6.564px;color:#fff;font-weight:700;transform:scaleX(0.9056);transform-origin:0 0;">Em execução</span>
<div style="left:729.30px;top:360.20px;width:44.50px;height:11.40px;background:#fff;border:1px solid #e0e0e0;border-radius:2px;box-sizing:border-box"></div>
<span style="left:732.20px;top:362.39px;font-size:6.983px;line-height:6.983px;color:#3c3c3c;transform:scaleX(0.9070);transform-origin:0 0;">TRAMITAR</span>
<svg style="left:765.6px;top:363.90px" width="5.2" height="3.6" viewBox="0 0 10 7"><path d="M1.3 1.3 L5 5 L8.7 1.3" stroke="#333" stroke-width="2.2" fill="none" stroke-linecap="round" stroke-linejoin="round"/></svg>
<svg style="left:705.3px;top:373.60px" width="8" height="8" viewBox="0 0 16 16"><path d="M0 0.5 H3.5 L4.3 3 H16 L14.2 9.8 H5.7 L6.2 11.3 H14.5 V13 H5 L2.4 2.2 H0Z" fill="#3a3a3a"/><circle cx="6.5" cy="14.6" r="1.4" fill="#3a3a3a"/><circle cx="13" cy="14.6" r="1.4" fill="#3a3a3a"/></svg>
<svg style="left:719.2px;top:373.60px" width="4.4" height="8.4" viewBox="0 0 8.8 16.8"><path d="M7.6 4.2 C7.2 3 6 2.4 4.4 2.4 C2.6 2.4 1.4 3.3 1.4 4.6 C1.4 7.6 7.6 6.6 7.6 10.6 C7.6 12.2 6.2 13.4 4.4 13.4 C2.6 13.4 1.4 12.6 1 11.3 M4.4 0 V2.4 M4.4 13.4 V16.8" stroke="#3a3a3a" stroke-width="2.3" fill="none"/></svg>
<svg style="left:728px;top:373.40px" width="9.6" height="8.4" viewBox="0 0 19.2 16.8"><path d="M10 2.5 H2.5 Q1.2 2.5 1.2 3.8 V14.2 Q1.2 15.5 2.5 15.5 H12.8 Q14.1 15.5 14.1 14.2 V9" stroke="#3a3a3a" stroke-width="1.7" fill="none"/><path d="M6 12 L6.8 8.6 L14.8 0.8 L17.8 3.8 L9.6 11.4Z" fill="none" stroke="#3a3a3a" stroke-width="1.6" stroke-linejoin="round"/></svg>
<svg style="left:742.4px;top:373.40px" width="5.6" height="8.4" viewBox="0 0 11.2 16.8"><path d="M0 1 Q0 0 1 0 H7 V4.5 H11.2 V15.8 Q11.2 16.8 10.2 16.8 H1 Q0 16.8 0 15.8Z M8 0 L11.2 3.5 H8Z" fill="#3a3a3a"/><path d="M2.5 9 H8.7 M2.5 11.5 H8.7 M2.5 14 H8.7" stroke="#999" stroke-width="1"/></svg>
<svg style="left:752.7px;top:373.50px" width="8.4" height="8.4" viewBox="0 0 16 16"><path d="M0.8 15.2 L1.8 10.8 L11.5 1.1 L14.9 4.5 L5.2 14.2Z" fill="#3a3a3a"/><path d="M3 11 L5 13" stroke="#fff" stroke-width="0.9"/></svg>
<div style="left:767.6px;top:374.20px;width:2.1px;height:2.1px;border-radius:50%;background:#3a3a3a"></div>
<div style="left:767.6px;top:377.20px;width:2.1px;height:2.1px;border-radius:50%;background:#3a3a3a"></div>
<div style="left:767.6px;top:380.20px;width:2.1px;height:2.1px;border-radius:50%;background:#3a3a3a"></div>
<div style="left:15.00px;top:389.40px;width:767.00px;height:0.80px;background:#ececec"></div>
<div style="left:60.02px;top:397.30px;width:21.38px;height:9.20px;background:#d4e9f6;border-radius:4.6px"></div>
<span style="left:62.72px;top:398.61px;font-size:6.600px;line-height:6.600px;color:#3d5d78;">2185</span>
<div style="left:22.69px;top:409.40px;width:58.71px;height:9.20px;background:#d4e9f6;border-radius:4.6px"></div>
<span style="left:27.19px;top:411.06px;font-size:6.900px;line-height:6.900px;color:#3d5d78;">123456805/</span>
<span style="left:65.24px;top:412.16px;font-size:5.600px;line-height:5.600px;color:#3d5d78;">2025</span>
<span style="left:86.30px;top:397.54px;font-size:8.101px;line-height:8.101px;color:#404040;transform:scaleX(0.9590);transform-origin:0 0;">aaabccccc</span>
<span style="left:125.00px;top:398.52px;font-size:6.950px;line-height:6.950px;color:#6c6c6c;">(12.146.814/0001-18)</span>
<div style="left:85.50px;top:408.00px;width:69.20px;height:10.00px;background:#808080;border-radius:5px"></div>
<span style="left:89.50px;top:409.56px;font-size:6.900px;line-height:6.900px;color:#fff;font-weight:700;">Termo de Contrato</span>
<span style="left:157.20px;top:410.69px;font-size:7.100px;line-height:7.100px;color:#6c6c6c;">teste tali</span>
<span style="left:549.00px;top:398.31px;font-size:7.194px;line-height:7.194px;color:#222;font-weight:700;">10/07/2025</span>
<span style="left:543.60px;top:411.06px;font-size:6.900px;line-height:6.900px;color:#777;">R$</span>
<span style="left:553.50px;top:411.09px;font-size:6.867px;line-height:6.867px;color:#333;font-weight:700;">150,00</span>
<svg style="left:577px;top:409.80px" width="7" height="6" viewBox="0 0 14 12"><path d="M0 0 H3 V3 H0Z M0 4.5 H3 V7.5 H0Z M0 9 H3 V12 H0Z M4.5 0 H14 V3 H4.5Z M4.5 4.5 H14 V7.5 H4.5Z M4.5 9 H14 V12 H4.5Z" fill="#333"/></svg>
<div style="left:680.80px;top:396.10px;width:47.90px;height:10.60px;background:#2e9b70;border-radius:5.3px"></div>
<span style="left:685.50px;top:398.44px;font-size:6.564px;line-height:6.564px;color:#fff;font-weight:700;transform:scaleX(0.9056);transform-origin:0 0;">Em execução</span>
<div style="left:729.30px;top:395.80px;width:44.50px;height:11.40px;background:#fff;border:1px solid #e0e0e0;border-radius:2px;box-sizing:border-box"></div>
<span style="left:732.20px;top:397.99px;font-size:6.983px;line-height:6.983px;color:#3c3c3c;transform:scaleX(0.9070);transform-origin:0 0;">TRAMITAR</span>
<svg style="left:765.6px;top:399.50px" width="5.2" height="3.6" viewBox="0 0 10 7"><path d="M1.3 1.3 L5 5 L8.7 1.3" stroke="#333" stroke-width="2.2" fill="none" stroke-linecap="round" stroke-linejoin="round"/></svg>
<svg style="left:705.3px;top:409.20px" width="8" height="8" viewBox="0 0 16 16"><path d="M0 0.5 H3.5 L4.3 3 H16 L14.2 9.8 H5.7 L6.2 11.3 H14.5 V13 H5 L2.4 2.2 H0Z" fill="#3a3a3a"/><circle cx="6.5" cy="14.6" r="1.4" fill="#3a3a3a"/><circle cx="13" cy="14.6" r="1.4" fill="#3a3a3a"/></svg>
<svg style="left:719.2px;top:409.20px" width="4.4" height="8.4" viewBox="0 0 8.8 16.8"><path d="M7.6 4.2 C7.2 3 6 2.4 4.4 2.4 C2.6 2.4 1.4 3.3 1.4 4.6 C1.4 7.6 7.6 6.6 7.6 10.6 C7.6 12.2 6.2 13.4 4.4 13.4 C2.6 13.4 1.4 12.6 1 11.3 M4.4 0 V2.4 M4.4 13.4 V16.8" stroke="#3a3a3a" stroke-width="2.3" fill="none"/></svg>
<svg style="left:728px;top:409.00px" width="9.6" height="8.4" viewBox="0 0 19.2 16.8"><path d="M10 2.5 H2.5 Q1.2 2.5 1.2 3.8 V14.2 Q1.2 15.5 2.5 15.5 H12.8 Q14.1 15.5 14.1 14.2 V9" stroke="#3a3a3a" stroke-width="1.7" fill="none"/><path d="M6 12 L6.8 8.6 L14.8 0.8 L17.8 3.8 L9.6 11.4Z" fill="none" stroke="#3a3a3a" stroke-width="1.6" stroke-linejoin="round"/></svg>
<svg style="left:742.4px;top:409.00px" width="5.6" height="8.4" viewBox="0 0 11.2 16.8"><path d="M0 1 Q0 0 1 0 H7 V4.5 H11.2 V15.8 Q11.2 16.8 10.2 16.8 H1 Q0 16.8 0 15.8Z M8 0 L11.2 3.5 H8Z" fill="#3a3a3a"/><path d="M2.5 9 H8.7 M2.5 11.5 H8.7 M2.5 14 H8.7" stroke="#999" stroke-width="1"/></svg>
<svg style="left:752.7px;top:409.10px" width="8.4" height="8.4" viewBox="0 0 16 16"><path d="M0.8 15.2 L1.8 10.8 L11.5 1.1 L14.9 4.5 L5.2 14.2Z" fill="#3a3a3a"/><path d="M3 11 L5 13" stroke="#fff" stroke-width="0.9"/></svg>
<div style="left:767.6px;top:409.20px;width:2.1px;height:2.1px;border-radius:50%;background:#3a3a3a"></div>
<div style="left:767.6px;top:412.20px;width:2.1px;height:2.1px;border-radius:50%;background:#3a3a3a"></div>
<div style="left:767.6px;top:415.20px;width:2.1px;height:2.1px;border-radius:50%;background:#3a3a3a"></div>
<div style="left:15.00px;top:425.00px;width:767.00px;height:0.80px;background:#ececec"></div>
<div style="left:60.02px;top:432.90px;width:21.38px;height:9.20px;background:#d4e9f6;border-radius:4.6px"></div>
<span style="left:62.72px;top:434.21px;font-size:6.600px;line-height:6.600px;color:#3d5d78;">2184</span>
<div style="left:53.39px;top:445.00px;width:28.01px;height:9.20px;background:#d4e9f6;border-radius:4.6px"></div>
<span style="left:57.89px;top:446.66px;font-size:6.900px;line-height:6.900px;color:#3d5d78;">2/</span>
<span style="left:65.24px;top:447.76px;font-size:5.600px;line-height:5.600px;color:#3d5d78;">2024</span>
<span style="left:86.30px;top:433.14px;font-size:8.101px;line-height:8.101px;color:#404040;transform:scaleX(1.0263);transform-origin:0 0;">Batata frita</span>
<span style="left:128.50px;top:434.12px;font-size:6.950px;line-height:6.950px;color:#6c6c6c;">(20.174.368/0001-83) Processo nº 42/2025</span>
<div style="left:85.50px;top:443.60px;width:64.24px;height:10.00px;background:#808080;border-radius:5px"></div>
<span style="left:89.50px;top:445.16px;font-size:6.900px;line-height:6.900px;color:#fff;font-weight:700;">Termo de adesão</span>
<span style="left:152.24px;top:446.29px;font-size:7.100px;line-height:7.100px;color:#6c6c6c;">teste ata de registro de precos, transferencia, não mexer</span>
<span style="left:549.00px;top:433.91px;font-size:7.194px;line-height:7.194px;color:#222;font-weight:700;">19/03/2026</span>
<div style="left:680.80px;top:431.70px;width:47.90px;height:10.60px;background:#2e9b70;border-radius:5.3px"></div>
<span style="left:685.50px;top:434.04px;font-size:6.564px;line-height:6.564px;color:#fff;font-weight:700;transform:scaleX(0.9056);transform-origin:0 0;">Em execução</span>
<div style="left:729.30px;top:431.40px;width:44.50px;height:11.40px;background:#fff;border:1px solid #e0e0e0;border-radius:2px;box-sizing:border-box"></div>
<span style="left:732.20px;top:433.59px;font-size:6.983px;line-height:6.983px;color:#3c3c3c;transform:scaleX(0.9070);transform-origin:0 0;">TRAMITAR</span>
<svg style="left:765.6px;top:435.10px" width="5.2" height="3.6" viewBox="0 0 10 7"><path d="M1.3 1.3 L5 5 L8.7 1.3" stroke="#333" stroke-width="2.2" fill="none" stroke-linecap="round" stroke-linejoin="round"/></svg>
<svg style="left:705.3px;top:444.80px" width="8" height="8" viewBox="0 0 16 16"><path d="M0 0.5 H3.5 L4.3 3 H16 L14.2 9.8 H5.7 L6.2 11.3 H14.5 V13 H5 L2.4 2.2 H0Z" fill="#3a3a3a"/><circle cx="6.5" cy="14.6" r="1.4" fill="#3a3a3a"/><circle cx="13" cy="14.6" r="1.4" fill="#3a3a3a"/></svg>
<svg style="left:719.2px;top:444.80px" width="4.4" height="8.4" viewBox="0 0 8.8 16.8"><path d="M7.6 4.2 C7.2 3 6 2.4 4.4 2.4 C2.6 2.4 1.4 3.3 1.4 4.6 C1.4 7.6 7.6 6.6 7.6 10.6 C7.6 12.2 6.2 13.4 4.4 13.4 C2.6 13.4 1.4 12.6 1 11.3 M4.4 0 V2.4 M4.4 13.4 V16.8" stroke="#3a3a3a" stroke-width="2.3" fill="none"/></svg>
<svg style="left:728px;top:444.60px" width="9.6" height="8.4" viewBox="0 0 19.2 16.8"><path d="M10 2.5 H2.5 Q1.2 2.5 1.2 3.8 V14.2 Q1.2 15.5 2.5 15.5 H12.8 Q14.1 15.5 14.1 14.2 V9" stroke="#3a3a3a" stroke-width="1.7" fill="none"/><path d="M6 12 L6.8 8.6 L14.8 0.8 L17.8 3.8 L9.6 11.4Z" fill="none" stroke="#3a3a3a" stroke-width="1.6" stroke-linejoin="round"/></svg>
<svg style="left:742.4px;top:444.60px" width="5.6" height="8.4" viewBox="0 0 11.2 16.8"><path d="M0 1 Q0 0 1 0 H7 V4.5 H11.2 V15.8 Q11.2 16.8 10.2 16.8 H1 Q0 16.8 0 15.8Z M8 0 L11.2 3.5 H8Z" fill="#3a3a3a"/><path d="M2.5 9 H8.7 M2.5 11.5 H8.7 M2.5 14 H8.7" stroke="#999" stroke-width="1"/></svg>
<svg style="left:752.7px;top:444.70px" width="8.4" height="8.4" viewBox="0 0 16 16"><path d="M0.8 15.2 L1.8 10.8 L11.5 1.1 L14.9 4.5 L5.2 14.2Z" fill="#3a3a3a"/><path d="M3 11 L5 13" stroke="#fff" stroke-width="0.9"/></svg>
<div style="left:767.6px;top:445.20px;width:2.1px;height:2.1px;border-radius:50%;background:#3a3a3a"></div>
<div style="left:767.6px;top:448.20px;width:2.1px;height:2.1px;border-radius:50%;background:#3a3a3a"></div>
<div style="left:767.6px;top:451.20px;width:2.1px;height:2.1px;border-radius:50%;background:#3a3a3a"></div>
<div style="left:15.00px;top:460.60px;width:767.00px;height:0.80px;background:#ececec"></div>
<div style="left:699.40px;top:432.30px;width:74.60px;height:20.00px;background:#1a68b2;border-radius:2px 0 0 0"></div>
<div style="left:774.00px;top:432.30px;width:16.60px;height:20.00px;background:#535353;border-radius:0 2px 0 0"></div>
<svg style="left:703.8px;top:437.2px" width="8.8" height="7.4" viewBox="0 0 17.6 14.8"><path d="M0.5 4 H5.5 V10 H0.5Z" fill="#fff"/><path d="M5.5 4 L15.6 1.2 V13 L5.5 10Z" fill="none" stroke="#fff" stroke-width="2.2" stroke-linejoin="round"/><path d="M2.2 10 L4 14.5 H7 L6 10Z" fill="#fff"/></svg>
<span style="left:717.00px;top:438.32px;font-size:7.062px;line-height:7.062px;color:#e8f0ff;-webkit-text-stroke:0.2px #e8f0ff;">Dê a sua opinião</span>
<svg style="left:778.7px;top:436.7px" width="7.8" height="7.8" viewBox="0 0 16 16"><circle cx="8" cy="8" r="7.5" fill="#fff"/><path d="M5.3 6.2 C5.3 4.4 6.6 3.6 8.1 3.6 C9.7 3.6 10.9 4.5 10.9 5.9 C10.9 7.6 8.6 7.9 8.3 9.6" stroke="#535353" stroke-width="2.3" fill="none"/><circle cx="8.1" cy="12.2" r="1.4" fill="#535353"/></svg>
</body></html>
